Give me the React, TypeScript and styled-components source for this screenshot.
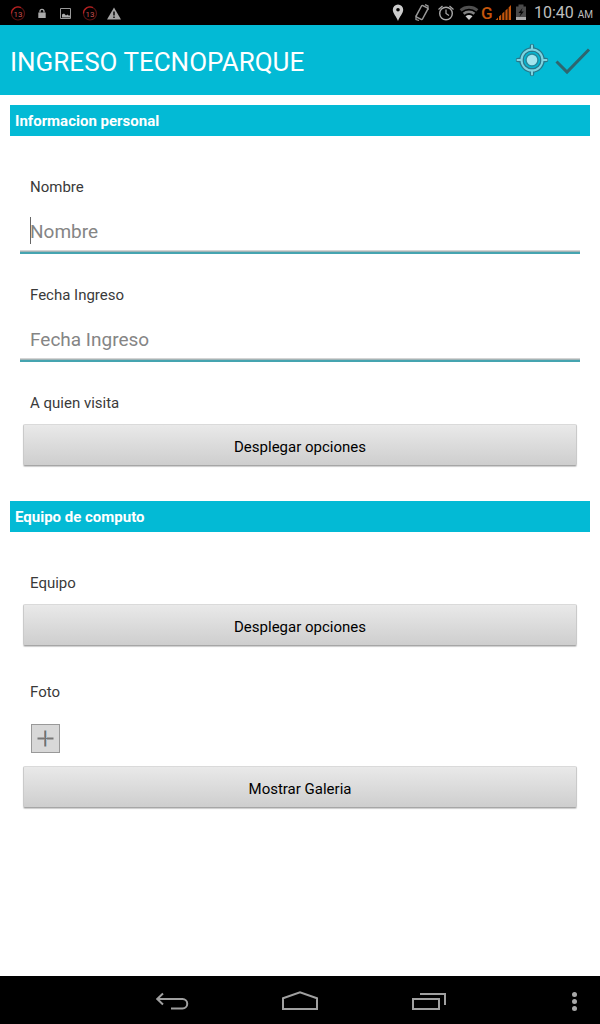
import React from "react";
import styled, { createGlobalStyle } from "styled-components";

const GlobalStyle = createGlobalStyle`
  *, *::before, *::after { box-sizing: border-box; }
  body { margin: 0; background: #fff; font-family: Roboto, "Noto Sans", sans-serif; }
`;

const Screen = styled.div`
  min-height: 100vh;
  display: flex;
  flex-direction: column;
`;

const StatusBar = styled.div`
  display: flex;
  justify-content: space-between;
  align-items: center;
  height: 25px;
  padding: 0 6px;
  background: #000;
  color: #bebebe;
`;

const StatusGroup = styled.div`
  display: flex;
  align-items: center;
  svg { display: block; flex: none; }
`;

const Clock = styled.time`
  padding: 2px 1px 0 5px;
  font-size: 16px;
  line-height: 22px;
  white-space: nowrap;
  small { font-size: 10px; }
`;

const AppBar = styled.header`
  display: flex;
  align-items: center;
  justify-content: space-between;
  height: 70px;
  padding: 0 9px 0 10px;
  background: #03bad5;
`;

const Title = styled.h1`
  margin: 0;
  padding-top: 4px;
  color: #fff;
  font-size: 26px;
  line-height: 32px;
  font-weight: 400;
`;

const Actions = styled.div`
  display: flex;
  gap: 6px;
`;

const IconButton = styled.button`
  padding: 0;
  border: 0;
  background: none;
  cursor: pointer;
  svg { display: block; }
`;

const Form = styled.form`
  flex: 1;
  display: flex;
  flex-direction: column;
  gap: 35px;
  padding: 10px 10px 32px;
`;

const SectionTitle = styled.h2`
  margin: 0 0 41px;
  padding: 2px 5px 0;
  background: #03bad5;
  color: #fff;
  font-size: 15px;
  line-height: 29px;
  font-weight: 700;
`;

const Fields = styled.div<{ $gap: number }>`
  display: flex;
  flex-direction: column;
  gap: ${(p) => p.$gap}px;
  padding: 0 10px;
`;

const Field = styled.div`
  display: flex;
  flex-direction: column;
`;

const Label = styled.label`
  padding: 0 10px;
  color: #3a3a3a;
  font-size: 15px;
  line-height: 20px;
`;

const InputWrap = styled.div`
  position: relative;
  margin-top: 13px;
`;

const Caret = styled.span`
  position: absolute;
  left: 10px;
  top: 7px;
  width: 1px;
  height: 27px;
  background: #666;
`;

const TextInput = styled.input`
  display: block;
  width: 100%;
  height: 44px;
  padding: 0 10px 2px;
  border: 0;
  border-radius: 0;
  outline: none;
  background: linear-gradient(#d4d4d4 1px, #a3b4b6 1px 2px, #45a4b0 2px) bottom / 100% 4px no-repeat;
  color: #222;
  font: 400 19px/26px Roboto, "Noto Sans", sans-serif;
  &::placeholder { color: #858585; opacity: 1; }
`;

const WideButton = styled.button`
  height: 42px;
  margin: 11px 3px 0;
  padding: 4px 0 0;
  border: 1px solid #cacaca;
  border-top-color: #dadada;
  border-bottom-color: #a6a6a6;
  border-radius: 2px;
  box-shadow: 0 1px 1px #ccc;
  background: linear-gradient(#e9e9e9, #cecece);
  color: #000;
  font: 400 15px/20px Roboto, "Noto Sans", sans-serif;
  cursor: pointer;
`;

const AddButton = styled.button`
  align-self: flex-start;
  display: grid;
  place-items: center;
  width: 29px;
  height: 29px;
  margin: 22px 0 2px 11px;
  padding: 0;
  border: 1px solid #999;
  background: #d8d8d8;
  cursor: pointer;
`;

const NavBar = styled.nav`
  display: grid;
  grid-template-columns: 107px repeat(3, 1fr) 107px;
  align-items: center;
  justify-items: center;
  height: 48px;
  padding-top: 4px;
  background: #000;
  ${IconButton}:first-child { grid-column: 2; }
  ${IconButton}:last-child { justify-self: end; padding-right: 16px; }
`;

const DownloadIcon = () => (
  <svg width="24" height="24" viewBox="0 0 24 24" fill="none" aria-hidden="true">
    <circle cx="12" cy="12.500" r="6.500" stroke="#571212" strokeWidth="1.200" />
    <path d="M5.500 12.500a6.500 6.500 0 0 1 9.500-5.800" stroke="#b02020" strokeWidth="1.300" />
    <text x="12" y="15.500" textAnchor="middle" fontSize="8" fontFamily="Roboto, sans-serif" fill="#c85050">13</text>
  </svg>
);

const LockIcon = () => (
  <svg width="24" height="24" viewBox="0 0 24 24" fill="none" aria-hidden="true">
    <rect x="8.300" y="11.500" width="7.400" height="5.500" fill="#aaa" />
    <path d="M10 11.500V10.300a2 2 0 0 1 4 0v1.200" stroke="#aaa" strokeWidth="1.300" />
  </svg>
);

const PictureIcon = () => (
  <svg width="24" height="24" viewBox="0 0 24 24" fill="none" aria-hidden="true">
    <path d="M6.500 7.500h10v10h-10z" stroke="#999" />
    <path d="M8 16.500v-3l2-1 2 2 1.500-1 1 1H16v2z" fill="#aaa" />
  </svg>
);

const WarningIcon = () => (
  <svg width="24" height="24" viewBox="0 0 24 24" aria-hidden="true">
    <path d="M12 6.500 19 18.500H5z" fill="#a5a5a5" />
    <path d="M11.200 10.500h1.600v4h-1.600zM11.200 15.500h1.600v1.500h-1.600z" fill="#111" />
  </svg>
);

const PinIcon = () => (
  <svg width="24" height="24" viewBox="0 0 24 24" aria-hidden="true">
    <path fillRule="evenodd" d="M12 3.500a5.200 5.200 0 0 0-5.200 5.200c0 3.600 3.800 7 5.200 11.300 1.400-4.300 5.200-7.700 5.200-11.300A5.200 5.200 0 0 0 12 3.500zm0 3.400a1.800 1.800 0 1 1 0 3.600 1.800 1.800 0 0 1 0-3.600z" fill="#ccc" />
  </svg>
);

const RotateIcon = () => (
  <svg width="24" height="24" viewBox="0 0 24 24" fill="none" stroke="#999" aria-hidden="true">
    <rect x="8.500" y="5" width="7" height="13" rx="1" transform="rotate(28 12 11.500)" strokeWidth="1.500" />
    <path d="M6 14.500v4l3 1M18 9V5l-3-1.300" strokeWidth="1.300" />
  </svg>
);

const AlarmIcon = () => (
  <svg width="24" height="24" viewBox="0 0 24 24" fill="none" stroke="#aaa" aria-hidden="true">
    <circle cx="12" cy="12.500" r="6.300" strokeWidth="1.400" />
    <path d="M12 8.500v4l3 2M4.500 8.500 8.500 5M19.500 8.500 15.500 5" strokeWidth="1.200" />
  </svg>
);

const WifiIcon = () => (
  <svg width="22" height="24" viewBox="0 0 22 24" fill="none" aria-hidden="true">
    <path d="M2.600 9.300c4.800-4 12-4 16.800 0" stroke="#505050" strokeWidth="3" />
    <path d="M5.600 12.800c3.100-2.700 7.700-2.700 10.800 0" stroke="#808080" strokeWidth="2.600" />
    <path d="M7.500 15.300c2-1.700 5-1.700 7 0L11 19z" fill="#ccc" />
  </svg>
);

const SignalIcon = () => (
  <svg width="32" height="24" viewBox="0 0 32 24" fill="#c4560c" aria-hidden="true">
    <text x="1" y="18" fontSize="17" fontWeight="500" fontFamily="Roboto, sans-serif">G</text>
    <path d="M15.500 19l2.500-2.500V19zM19 15.500l2.200-2V19H19zM22.200 12.500l2.200-2V19h-2.200zM25.400 9.500l2.200-2V19h-2.200zM28.600 6.500l2.400-2.500v15h-2.400z" />
  </svg>
);

const BatteryIcon = () => (
  <svg width="17" height="24" viewBox="0 0 17 24" aria-hidden="true">
    <path d="M6.500 3.500h5v2h2.500V16H4V5.500h2.500z" fill="#4a4a4a" />
    <path d="M4 16h10v3H4z" fill="#aaa" />
    <path d="M10.500 7l-4 5h2.400l-1.400 3.800 4.300-5.200H9.300z" fill="#050505" />
  </svg>
);

const LocateIcon = () => (
  <svg width="34" height="34" viewBox="0 0 34 34" fill="none" aria-hidden="true">
    <g stroke="#27788b" strokeWidth="4.500" strokeLinecap="round">
      <circle cx="17" cy="17" r="10.500" />
      <path d="M17 3v4M17 27v4M3 17h4M27 17h4" />
    </g>
    <g stroke="#7fd4e0" strokeWidth="2" strokeLinecap="round">
      <circle cx="17" cy="17" r="10.500" />
      <path d="M17 2.500v4M17 27.500v4M2.500 17h4M27.500 17h4" />
    </g>
    <circle cx="17" cy="17" r="6" fill="#a3e5ee" stroke="#27899b" strokeWidth="1.500" />
  </svg>
);

const CheckIcon = () => (
  <svg width="36" height="34" viewBox="0 0 36 34" fill="none" aria-hidden="true">
    <path d="M1.500 18.500 12 29 34 6.500" stroke="#2e666f" strokeWidth="3" />
  </svg>
);

const PlusIcon = () => (
  <svg width="17" height="17" viewBox="0 0 17 17" aria-hidden="true">
    <path d="M0.500 7.500h16v2h-16z" fill="#777" />
    <path d="M7 0.500h1v16H7z" fill="#a58a7a" />
    <path d="M8 0.500h1v16H8z" fill="#6d7278" />
    <path d="M9 0.500h1v16H9z" fill="#9fc0d8" />
    <path d="M7 8h3v1H7z" fill="#777" />
  </svg>
);

const BackIcon = () => (
  <svg width="36" height="24" viewBox="0 0 36 24" fill="none" stroke="#a0a0a0" strokeWidth="2" aria-hidden="true">
    <path d="M4.500 9h25a4.700 4.700 0 0 1 0 9.500H18M10 3.500 4.200 9l5.800 5.500" />
  </svg>
);

const HomeIcon = () => (
  <svg width="36" height="24" viewBox="0 0 36 24" fill="none" stroke="#a0a0a0" strokeWidth="2" aria-hidden="true">
    <path d="M1 19V8.200L18 2.200l17 6V19z" />
  </svg>
);

const RecentIcon = () => (
  <svg width="36" height="24" viewBox="0 0 36 24" fill="none" stroke="#a0a0a0" strokeWidth="2" aria-hidden="true">
    <path d="M2 9h26v10H2zM9 4h25v11" />
  </svg>
);

const MoreIcon = () => (
  <svg width="20" height="24" viewBox="0 0 20 24" fill="#a8a8a8" aria-hidden="true">
    <circle cx="10.500" cy="4.500" r="2.500" />
    <circle cx="10.500" cy="11.500" r="2.500" />
    <circle cx="10.500" cy="18.500" r="2.500" />
  </svg>
);

export default function App() {
  return (
    <Screen>
      <GlobalStyle />
      <StatusBar>
        <StatusGroup>
          <DownloadIcon />
          <LockIcon />
          <PictureIcon />
          <DownloadIcon />
          <WarningIcon />
        </StatusGroup>
        <StatusGroup>
          <PinIcon />
          <RotateIcon />
          <AlarmIcon />
          <WifiIcon />
          <SignalIcon />
          <BatteryIcon />
          <Clock>10:40 <small>AM</small></Clock>
        </StatusGroup>
      </StatusBar>

      <AppBar>
        <Title>INGRESO TECNOPARQUE</Title>
        <Actions>
          <IconButton type="button" aria-label="Ubicacion"><LocateIcon /></IconButton>
          <IconButton type="submit" form="ingreso" aria-label="Guardar"><CheckIcon /></IconButton>
        </Actions>
      </AppBar>

      <Form id="ingreso" onSubmit={(e) => e.preventDefault()}>
        <section>
          <SectionTitle>Informacion personal</SectionTitle>
          <Fields $gap={31}>
            <Field>
              <Label htmlFor="nombre">Nombre</Label>
              <InputWrap>
                <TextInput id="nombre" type="text" placeholder="Nombre" />
                <Caret />
              </InputWrap>
            </Field>
            <Field>
              <Label htmlFor="fecha">Fecha Ingreso</Label>
              <InputWrap>
                <TextInput id="fecha" type="text" placeholder="Fecha Ingreso" />
              </InputWrap>
            </Field>
            <Field>
              <Label htmlFor="visita">A quien visita</Label>
              <WideButton id="visita" type="button">Desplegar opciones</WideButton>
            </Field>
          </Fields>
        </section>

        <section>
          <SectionTitle>Equipo de computo</SectionTitle>
          <Fields $gap={36}>
            <Field>
              <Label htmlFor="equipo">Equipo</Label>
              <WideButton id="equipo" type="button">Desplegar opciones</WideButton>
            </Field>
            <Field>
              <Label htmlFor="foto">Foto</Label>
              <AddButton id="foto" type="button"><PlusIcon /></AddButton>
              <WideButton type="button">Mostrar Galeria</WideButton>
            </Field>
          </Fields>
        </section>
      </Form>

      <NavBar>
        <IconButton type="button" aria-label="Atras"><BackIcon /></IconButton>
        <IconButton type="button" aria-label="Inicio"><HomeIcon /></IconButton>
        <IconButton type="button" aria-label="Recientes"><RecentIcon /></IconButton>
        <IconButton type="button" aria-label="Menu"><MoreIcon /></IconButton>
      </NavBar>
    </Screen>
  );
}
